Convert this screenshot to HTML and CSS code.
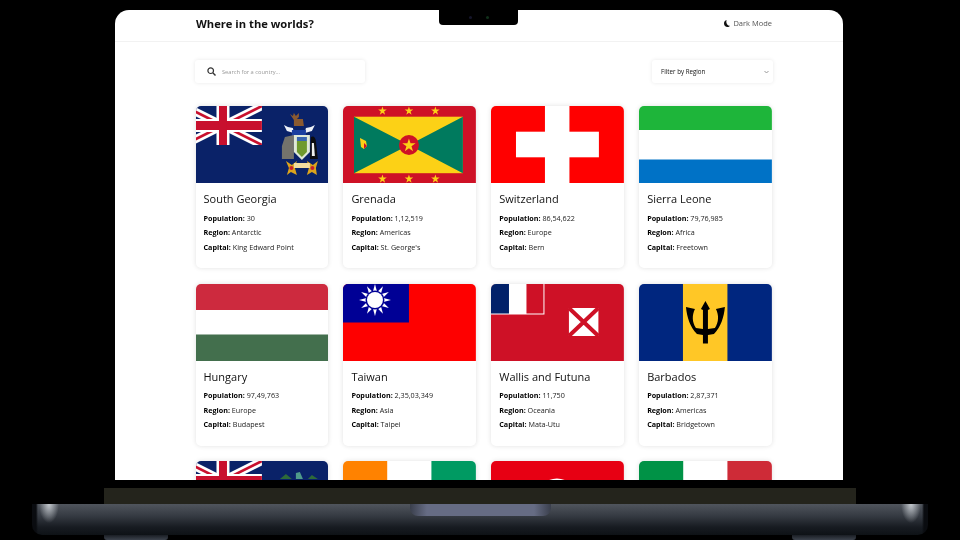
FILE: index.html
```html
<!DOCTYPE html>
<html lang="en">
<head>
    <meta charset="UTF-8">
    <meta name="viewport" content="width=device-width, initial-scale=1.0">
    <title>Where in the worlds?</title>
    <link rel="stylesheet" href="styles.css">
</head>
<body>
    <!-- shared flag parts -->
    <svg class="defs">
        <defs>
            <polygon id="star" points="0,-1 .225,-.309 .951,-.309 .363,.118 .588,.809 0,.382 -.588,.809 -.363,.118 -.951,-.309 -.225,-.309"/>
            <polygon id="ray" points="30,7.5 34,7.5 32,0"/>
            <symbol id="jack" viewBox="0 0 66 39">
                <path d="M-12 0L66 39M-12 39L66 0" stroke="#fff" stroke-width="8"/>
                <path d="M-12 0L66 39M-12 39L66 0" stroke="#c8102e" stroke-width="2.6"/>
                <rect x="-12" y="13" width="78" height="13" fill="#fff"/>
                <rect x="20.5" y="0" width="13" height="39" fill="#fff"/>
                <rect x="-12" y="15" width="78" height="9" fill="#c8102e"/>
                <rect x="23" y="0" width="8" height="39" fill="#c8102e"/>
            </symbol>
        </defs>
    </svg>

    <div class="laptop">
        <div class="screen">
            <div class="notch"><i class="cam"></i><i class="cam green"></i></div>

            <header class="topbar">
                <h1>Where in the worlds?</h1>
                <div class="mode">
                    <svg width="6" height="7" viewBox="0 0 6 7"><path d="M2.6 0C1 .6 0 1.9 0 3.4 0 5.4 1.5 7 3.5 7 4.6 7 5.5 6.6 6 5.8 3.6 6 1.6 3 2.6 0Z" fill="#111"/></svg>
                    <span>Dark Mode</span>
                </div>
            </header>

            <div class="toolbar">
                <div class="search">
                    <svg width="9" height="9" viewBox="0 0 9 9"><circle cx="3.7" cy="3.7" r="2.8" fill="none" stroke="#333" stroke-width="1.2"/><path d="M5.8 5.8L8.5 8.5" stroke="#333" stroke-width="1.4"/></svg>
                    <input type="text" placeholder="Search for a country...">
                </div>
                <div class="filter">
                    <span>Filter by Region</span>
                    <svg width="5" height="4" viewBox="0 0 5 4"><path d="M.5 1L2.500 3 4.500 1" fill="none" stroke="#999"/></svg>
                </div>
            </div>

            <div class="grid">
                <div class="card">
                    <svg class="flag" viewBox="0 0 133 77" preserveAspectRatio="none">
                        <rect width="133" height="77" fill="#0a2268"/>
                        <use href="#jack" width="66" height="39"/>
                        <g class="emblem">
                            <path d="M98 20V14L94 8 97 10 98 7 100 10 103 7 103 11 101 13 107 13 108 20Z" fill="#8a5a30"/>
                            <path d="M88 19L92 21 97 22 98 27 91 25ZM119 19L115 21 110 22 109 27 116 25Z" fill="#eef2f8"/>
                            <rect x="96" y="24" width="14" height="6" fill="#1a3fa0"/>
                            <path d="M89 31L98 29 98 53 86 53 86 40Z" fill="#74736c"/>
                            <path d="M98 29H114V46L106 54 98 46Z" fill="#dfe9d8"/>
                            <path d="M101 35H111V46L106 51 101 46Z" fill="#6f9a2e"/>
                            <rect x="101" y="31" width="10" height="4" fill="#3a66b0"/>
                            <path d="M115 31Q119 29 120 35L122 53H114Z" fill="#0c0c10"/>
                            <path d="M116 37L118 37 119 50H116Z" fill="#eee"/>
                            <path d="M90 55L96 59 101 55 99 62 101 69 95 66 91 69 93 62Z" fill="#dca41c"/>
                            <path d="M111 55L117 59 122 55 120 62 121 69 116 66 111 69 113 62Z" fill="#dca41c"/>
                            <rect x="98" y="57" width="16" height="5" fill="#f2dca0"/>
                            <circle cx="95.500" cy="62" r="2" fill="#c8202c"/>
                            <circle cx="116.500" cy="62" r="2" fill="#c8202c"/>
                        </g>
                    </svg>
                    <div class="info">
                        <h2>South Georgia</h2>
                        <p><b>Population:</b> 30</p>
                        <p><b>Region:</b> Antarctic</p>
                        <p><b>Capital:</b> King Edward Point</p>
                    </div>
                </div>

                <div class="card">
                    <svg class="flag" viewBox="0 0 133 77" preserveAspectRatio="none">
                        <rect width="133" height="77" fill="#ce1126"/>
                        <rect x="11" y="10.700" width="109" height="56.500" fill="#fcd116"/>
                        <path d="M11 10.700L66 39 11 67.200ZM120 10.700L66 39 120 67.200Z" fill="#007a5e"/>
                        <circle cx="66" cy="39" r="10" fill="#ce1126"/>
                        <use href="#star" fill="#fcd116" transform="translate(66 39.500) scale(7)"/>
                        <use href="#star" fill="#fcd116" transform="translate(39.500 5) scale(4.500)"/>
                        <use href="#star" fill="#fcd116" transform="translate(66 5) scale(4.500)"/>
                        <use href="#star" fill="#fcd116" transform="translate(92.500 5) scale(4.500)"/>
                        <use href="#star" fill="#fcd116" transform="translate(39.500 73) scale(4.500)"/>
                        <use href="#star" fill="#fcd116" transform="translate(66 73) scale(4.500)"/>
                        <use href="#star" fill="#fcd116" transform="translate(92.500 73) scale(4.500)"/>
                        <path d="M17 32L23 35 24 40 21 43 18 41Z" fill="#fcd116"/>
                        <path d="M21 37L24 40 21 43Z" fill="#ce1126"/>
                    </svg>
                    <div class="info">
                        <h2>Grenada</h2>
                        <p><b>Population:</b> 1,12,519</p>
                        <p><b>Region:</b> Americas</p>
                        <p><b>Capital:</b> St. George's</p>
                    </div>
                </div>

                <div class="card">
                    <svg class="flag" viewBox="0 0 133 77" preserveAspectRatio="none">
                        <rect width="133" height="77" fill="#f00"/>
                        <rect x="54" width="24.500" height="77" fill="#fff"/>
                        <rect x="25" y="25.700" width="83" height="25.600" fill="#fff"/>
                    </svg>
                    <div class="info">
                        <h2>Switzerland</h2>
                        <p><b>Population:</b> 86,54,622</p>
                        <p><b>Region:</b> Europe</p>
                        <p><b>Capital:</b> Bern</p>
                    </div>
                </div>

                <div class="card">
                    <svg class="flag" viewBox="0 0 133 77" preserveAspectRatio="none">
                        <rect width="133" height="24" fill="#1eb53a"/>
                        <rect y="24" width="133" height="29.500" fill="#fff"/>
                        <rect y="53.500" width="133" height="23.500" fill="#0072c6"/>
                    </svg>
                    <div class="info">
                        <h2>Sierra Leone</h2>
                        <p><b>Population:</b> 79,76,985</p>
                        <p><b>Region:</b> Africa</p>
                        <p><b>Capital:</b> Freetown</p>
                    </div>
                </div>

                <div class="card">
                    <svg class="flag" viewBox="0 0 133 77" preserveAspectRatio="none">
                        <rect width="133" height="26" fill="#cd2a3e"/>
                        <rect y="26" width="133" height="24.500" fill="#fff"/>
                        <rect y="50.500" width="133" height="26.500" fill="#436f4d"/>
                    </svg>
                    <div class="info">
                        <h2>Hungary</h2>
                        <p><b>Population:</b> 97,49,763</p>
                        <p><b>Region:</b> Europe</p>
                        <p><b>Capital:</b> Budapest</p>
                    </div>
                </div>

                <div class="card">
                    <svg class="flag" viewBox="0 0 133 77" preserveAspectRatio="none">
                        <rect width="133" height="77" fill="#fe0000"/>
                        <rect width="66" height="38.500" fill="#000095"/>
                        <g fill="#fff">
                            <use href="#ray"/>
                            <use href="#ray" transform="rotate(30 32 16)"/>
                            <use href="#ray" transform="rotate(60 32 16)"/>
                            <use href="#ray" transform="rotate(90 32 16)"/>
                            <use href="#ray" transform="rotate(120 32 16)"/>
                            <use href="#ray" transform="rotate(150 32 16)"/>
                            <use href="#ray" transform="rotate(180 32 16)"/>
                            <use href="#ray" transform="rotate(210 32 16)"/>
                            <use href="#ray" transform="rotate(240 32 16)"/>
                            <use href="#ray" transform="rotate(270 32 16)"/>
                            <use href="#ray" transform="rotate(300 32 16)"/>
                            <use href="#ray" transform="rotate(330 32 16)"/>
                        </g>
                        <circle cx="32" cy="16" r="9.500" fill="#000095"/>
                        <circle cx="32" cy="16" r="8" fill="#fff"/>
                    </svg>
                    <div class="info">
                        <h2>Taiwan</h2>
                        <p><b>Population:</b> 2,35,03,349</p>
                        <p><b>Region:</b> Asia</p>
                        <p><b>Capital:</b> Taipei</p>
                    </div>
                </div>

                <div class="card">
                    <svg class="flag" viewBox="0 0 133 77" preserveAspectRatio="none">
                        <rect width="133" height="77" fill="#ce1126"/>
                        <rect width="53.500" height="30.500" fill="#fff"/>
                        <rect width="18" height="29.500" fill="#012169"/>
                        <rect x="18" width="17.500" height="29.500" fill="#fff"/>
                        <rect x="35.500" width="17" height="29.500" fill="#ce1126"/>
                        <rect x="78" y="24" width="29.500" height="28" fill="#fff"/>
                        <path d="M78 24L107.500 52M107.500 24L78 52" stroke="#ce1126" stroke-width="4"/>
                    </svg>
                    <div class="info">
                        <h2>Wallis and Futuna</h2>
                        <p><b>Population:</b> 11,750</p>
                        <p><b>Region:</b> Oceania</p>
                        <p><b>Capital:</b> Mata-Utu</p>
                    </div>
                </div>

                <div class="card">
                    <svg class="flag" viewBox="0 0 133 77" preserveAspectRatio="none">
                        <rect width="133" height="77" fill="#00267f"/>
                        <rect x="44" width="44.500" height="77" fill="#ffc726"/>
                        <path d="M66.500 17L71 25 69 26V45L76 44C80 38 80 31 77 25L86 23C85 33 82 43 75 50L69 51V59.500H64V51L58 50C51 43 48 33 47 23L56 25C53 31 53 38 57 44L64 45V26L62 25Z" fill="#000"/>
                    </svg>
                    <div class="info">
                        <h2>Barbados</h2>
                        <p><b>Population:</b> 2,87,371</p>
                        <p><b>Region:</b> Americas</p>
                        <p><b>Capital:</b> Bridgetown</p>
                    </div>
                </div>

                <div class="card">
                    <svg class="flag" viewBox="0 0 133 77" preserveAspectRatio="none">
                        <rect width="133" height="77" fill="#0a2268"/>
                        <use href="#jack" width="66" height="39"/>
                        <g class="emblem">
                            <path d="M84 18L90 13 96 18ZM112 18L116 14 122 18Z" fill="#2e6a3a"/>
                            <path d="M100 18V12L104 11 107 18Z" fill="#4f9a8a"/>
                        </g>
                    </svg>
                </div>

                <div class="card">
                    <svg class="flag" viewBox="0 0 133 77" preserveAspectRatio="none">
                        <rect width="44.500" height="77" fill="#ff8200"/>
                        <rect x="44.500" width="44" height="77" fill="#fff"/>
                        <rect x="88.500" width="44.500" height="77" fill="#009a62"/>
                    </svg>
                </div>

                <div class="card">
                    <svg class="flag" viewBox="0 0 133 77" preserveAspectRatio="none">
                        <rect width="133" height="77" fill="#e70013"/>
                        <circle cx="66" cy="38.500" r="21" fill="#fff"/>
                    </svg>
                </div>

                <div class="card">
                    <svg class="flag" viewBox="0 0 133 77" preserveAspectRatio="none">
                        <rect width="44.500" height="77" fill="#009246"/>
                        <rect x="44.500" width="44" height="77" fill="#fff"/>
                        <rect x="88.500" width="44.500" height="77" fill="#ce2b37"/>
                    </svg>
                </div>
            </div>
        </div>

        <div class="hinge"></div>
        <div class="base"><div class="base-notch"></div></div>
        <div class="feet"><i class="foot"></i><i class="foot"></i></div>
    </div>
</body>
</html>
```

FILE: styles.css
```css
* {
    box-sizing: border-box;
}
html, body {
    height: 100%;
}
body {
    margin: 0;
    background: #000;
    font-family: "Open Sans", "Noto Sans", sans-serif;
    color: #111;
    overflow: hidden;
}
.defs {
    display: none;
}
.laptop {
    display: flex;
    flex-direction: column;
    align-items: center;
    height: 540px;
    padding-top: 10px;
}
.screen {
    position: relative;
    width: 728px;
    height: 470px;
    flex: none;
    margin-right: 2px;
    padding: 0 71px 0 80.5px;
    background: #fff;
    border-radius: 14px 14px 0 0;
    overflow: hidden;
}
.notch {
    position: absolute;
    top: 0;
    left: 324px;
    width: 79px;
    height: 15px;
    display: flex;
    justify-content: center;
    align-items: center;
    gap: 14px;
    padding-bottom: 10px;
    background: #000;
    border-radius: 0 0 4px 4px;
}
.cam {
    width: 3px;
    height: 3px;
    border-radius: 50%;
    background: #15152a;
    margin-top: 9px;
}
.cam.green {
    background: #10301a;
}

/* header */
.topbar {
    display: flex;
    justify-content: space-between;
    align-items: center;
    height: 32px;
    margin: 0 -71px 0 -80.5px;
    padding: 0 71px 5px 81px;
    border-bottom: 1px solid #f2f2f2;
    filter: blur(.25px);
}
.topbar h1 {
    margin: 0;
    font-size: 11.2px;
    font-weight: 700;
}
.mode {
    display: flex;
    align-items: center;
    gap: 3px;
    font-size: 7.5px;
    color: #555;
}

/* search and filter */
.toolbar {
    display: flex;
    justify-content: space-between;
    margin: 18px -1px 23px -.5px;
}
.search, .filter {
    display: flex;
    align-items: center;
    height: 23px;
    background: #fff;
    border-radius: 3px;
    box-shadow: 0 0 4px rgba(0,0,0,0.09);
}
.search {
    width: 170px;
    padding-left: 12px;
    gap: 6px;
}
.search input {
    flex: 1;
    min-width: 0;
    border: none;
    padding: 0;
    outline: none;
    font-family: inherit;
    font-size: 5.7px;
    filter: blur(.4px);
}
.search input::placeholder {
    color: #999;
}
.filter {
    width: 121px;
    padding: 0 4px 0 9px;
    justify-content: space-between;
    font-size: 6.2px;
}
.filter span {
    filter: blur(.4px);
}

/* country cards */
.grid {
    display: grid;
    grid-template-columns: repeat(4, 1fr);
    gap: 15.5px 15px;
}
.card {
    height: 162px;
    background: #fff;
    border-radius: 5px;
    box-shadow: 0 0 5px rgba(0,0,0,0.12);
    overflow: hidden;
}
.flag {
    display: block;
    width: 100%;
    height: 77px;
}
.emblem {
    filter: blur(.5px);
}
.info {
    padding: 8px 8px 0;
    filter: blur(.35px);
}
.info h2 {
    margin: 0 0 4.75px;
    font-size: 11px;
    line-height: 15px;
    font-weight: 500;
}
.info p {
    margin: 0;
    font-size: 7.2px;
    line-height: 14.5px;
    color: #222;
}
.info b {
    font-weight: 700;
    color: #000;
}

/* laptop body */
.hinge {
    width: 752px;
    height: 17px;
    flex: none;
    margin-top: 8px;
    background: #24241c;
}
.base {
    display: flex;
    justify-content: center;
    width: 896px;
    height: 31px;
    flex: none;
    margin-top: -1px;
    border-radius: 0 0 10px 10px;
    background:
        linear-gradient(90deg, #0a0c10 0, #0a0c10 4px, transparent 6px),
        linear-gradient(270deg, #0a0c10 0, #0a0c10 4px, transparent 6px),
        radial-gradient(ellipse 10px 19px at 17px 0, rgba(215,220,225,0.85), transparent),
        radial-gradient(ellipse 10px 19px at 879px 0, rgba(215,220,225,0.85), transparent),
        linear-gradient(180deg, #50555d 0, #343941 40%, #171b21 75%, #0e1216 100%);
}
.base-notch {
    width: 141px;
    height: 12px;
    border-radius: 0 0 8px 8px;
    background: linear-gradient(90deg, #3a3f4c, #666c84 12%, #666c84 88%, #3a3f4c);
}
.feet {
    display: flex;
    justify-content: space-between;
    width: 752px;
}
.foot {
    width: 64px;
    height: 5px;
    background: linear-gradient(180deg, #1a1e24, #3c424c);
    border-radius: 0 0 3px 3px;
}
```
